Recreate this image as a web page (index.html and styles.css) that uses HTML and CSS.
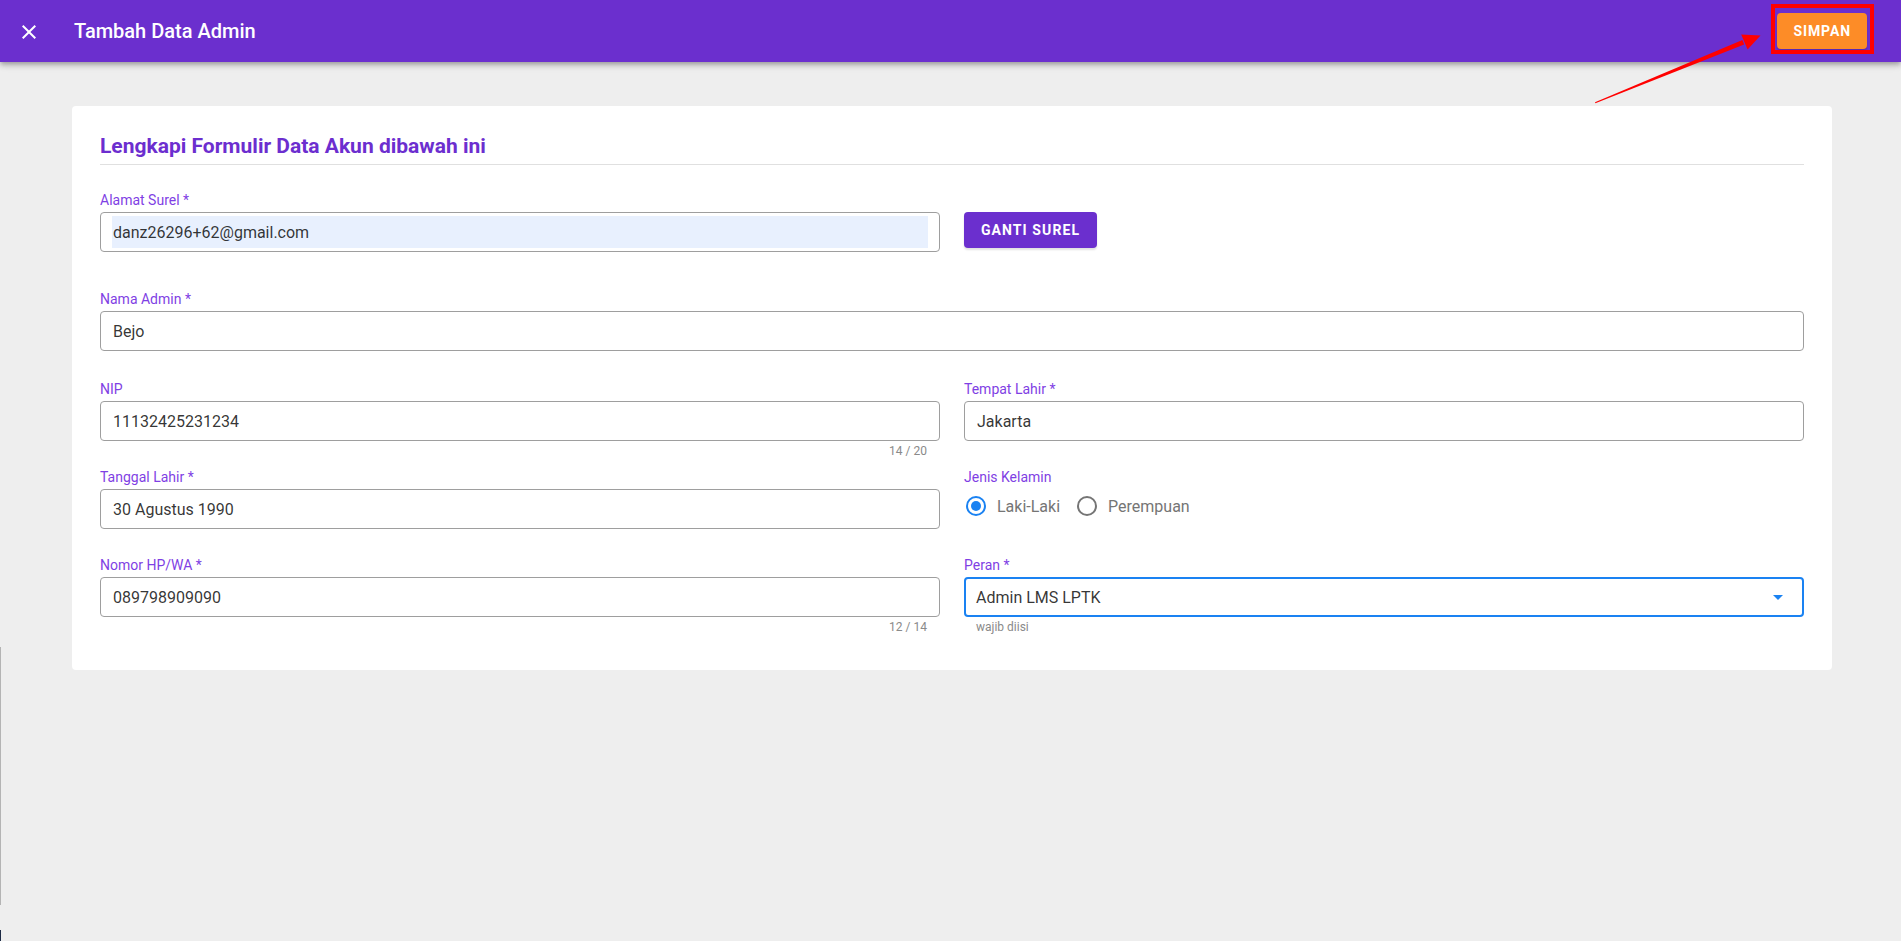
FILE: index.html
```html
<!DOCTYPE html>
<html lang="id">
<head>
<meta charset="utf-8">
<title>Tambah Data Admin</title>
<link rel="stylesheet" href="styles.css">
</head>
<body>
<header class="topbar">
  <button class="icon-btn" aria-label="Tutup">
    <svg viewBox="0 0 24 24" width="24" height="24"><path fill="#fff" d="M19,6.41L17.59,5L12,10.59L6.41,5L5,6.41L10.59,12L5,17.59L6.41,19L12,13.41L17.59,19L19,17.59L13.41,12L19,6.41Z"/></svg>
  </button>
  <div class="topbar-title">Tambah Data Admin</div>
  <button class="btn-save">SIMPAN</button>
</header>

<div class="annot-box"></div>
<svg class="annot-arrow" width="1901" height="120" viewBox="0 0 1901 120">
  <polygon fill="#f00" points="1595,102.2 1595.4,103.2 1744.2,44.6 1742.4,40.0"/>
  <polygon fill="#f00" points="1760.5,35.5 1741.2,34.4 1747.6,49.6"/>
</svg>
<div class="edge-line"></div>
<div class="edge-dark"></div>

<main class="page">
  <section class="card">
    <h2 class="card-title">Lengkapi Formulir Data Akun dibawah ini</h2>
    <div class="form-grid">
      <div class="field row-first">
        <label class="label">Alamat Surel *</label>
        <div class="input autofill"><span class="fill">danz26296+62@gmail.com</span></div>
        <div class="details"></div>
      </div>
      <div class="btn-cell row-first">
        <button class="btn-primary">GANTI SUREL</button>
      </div>

      <div class="field span2 row-name">
        <label class="label">Nama Admin *</label>
        <div class="input">Bejo</div>
        <div class="details"></div>
      </div>

      <div class="field">
        <label class="label">NIP</label>
        <div class="input">11132425231234</div>
        <div class="details counter">14 / 20</div>
      </div>
      <div class="field">
        <label class="label">Tempat Lahir *</label>
        <div class="input">Jakarta</div>
        <div class="details"></div>
      </div>

      <div class="field">
        <label class="label">Tanggal Lahir *</label>
        <div class="input">30 Agustus 1990</div>
        <div class="details"></div>
      </div>
      <div class="field">
        <label class="label">Jenis Kelamin</label>
        <div class="radio-group">
          <span class="radio checked"><span class="dot"></span></span>
          <span class="radio-text">Laki-Laki</span>
          <span class="radio"></span>
          <span class="radio-text">Perempuan</span>
        </div>
      </div>

      <div class="field">
        <label class="label">Nomor HP/WA *</label>
        <div class="input">089798909090</div>
        <div class="details counter">12 / 14</div>
      </div>
      <div class="field">
        <label class="label">Peran *</label>
        <div class="input select">
          <span>Admin LMS LPTK</span>
          <svg class="caret" viewBox="0 0 24 24" width="24" height="24"><path fill="#1a82f2" d="M7,10L12,15L17,10H7Z"/></svg>
        </div>
        <div class="details hint">wajib diisi</div>
      </div>
    </div>
  </section>
</main>
</body>
</html>
```

FILE: styles.css
```css
* { box-sizing: border-box; }

html, body {
  margin: 0;
  padding: 0;
}

body {
  background: #eeeeee;
  font-family: Roboto, "Liberation Sans", Arial, sans-serif;
  color: rgba(0, 0, 0, 0.87);
  min-height: 941px;
  position: relative;
}

.topbar {
  height: 62px;
  background: #6b2fce;
  display: flex;
  align-items: center;
  padding: 0 34px 0 17px;
  box-shadow: 0 2px 4px -1px rgba(0,0,0,.2), 0 4px 5px 0 rgba(0,0,0,.14), 0 1px 10px 0 rgba(0,0,0,.12);
  position: relative;
  z-index: 2;
}

.icon-btn {
  width: 24px;
  height: 24px;
  padding: 0;
  border: 0;
  background: transparent;
  display: flex;
  margin-top: 1px;
}

.topbar-title {
  margin-left: 33px;
  color: #fff;
  font-size: 20px;
  font-weight: 500;
  letter-spacing: 0;
}

.btn-save {
  margin-left: auto;
  height: 36px;
  padding: 0 16px;
  border: 0;
  border-radius: 4px;
  background: #fd8c27;
  color: #fff;
  font-family: Roboto, "Liberation Sans", Arial, sans-serif;
  font-size: 14px;
  font-weight: 700;
  letter-spacing: 0.9px;
  box-shadow: 0 2px 2px rgba(0,0,0,.15);
}

.annot-box {
  position: absolute;
  left: 1771px;
  top: 4px;
  width: 103px;
  height: 50px;
  border: 4px solid #f00;
  z-index: 3;
}

.annot-arrow {
  position: absolute;
  left: 0;
  top: 0;
  z-index: 3;
  pointer-events: none;
}

.edge-line {
  position: absolute;
  left: 0;
  top: 647px;
  width: 1px;
  height: 258px;
  background: #b4b4b4;
}

.edge-dark {
  position: absolute;
  left: 0;
  top: 930px;
  width: 1px;
  height: 11px;
  background: #1c2a44;
}

.page {
  padding: 44px 69px 0 72px;
}

.card {
  background: #fff;
  border-radius: 4px;
  padding: 26px 28px 31px;
}

.card-title {
  margin: 0 0 25px;
  padding-bottom: 4px;
  border-bottom: 1px solid #e0e0e0;
  font-size: 21px;
  line-height: 28px;
  font-weight: 700;
  color: #6c2ecf;
}

.form-grid {
  display: grid;
  grid-template-columns: 1fr 1fr;
  column-gap: 24px;
  row-gap: 4px;
}

.span2 { grid-column: 1 / -1; }

.row-first { margin-bottom: 11px; }
.row-name { margin-bottom: 2px; }

.field {
  display: flex;
  flex-direction: column;
}

.label {
  display: block;
  font-size: 14px;
  line-height: 20px;
  color: #7f3fe4;
  margin-bottom: 2px;
}

.input {
  height: 40px;
  border: 1px solid #9e9e9e;
  border-radius: 4px;
  padding: 0 12px;
  display: flex;
  align-items: center;
  font-size: 16px;
  color: rgba(0, 0, 0, 0.8);
}

.input.autofill {
  padding: 3px 11px;
  align-items: stretch;
}

.fill {
  flex: 1;
  background: #e8f0fe;
  display: flex;
  align-items: center;
  padding-left: 1px;
}

.input.select {
  border: 2px solid #1a82f2;
  padding: 0 12px 0 10px;
  justify-content: space-between;
}

.caret { display: block; }

.details {
  height: 22px;
  padding: 3px 13px 0 12px;
  font-size: 12px;
  line-height: 14px;
  color: #8a8a8a;
}

.counter { text-align: right; }
.hint { text-align: left; }

.btn-cell {
  padding-top: 22px;
}

.btn-primary {
  height: 36px;
  width: 133px;
  padding: 0;
  border: 0;
  border-radius: 4px;
  background: #6b2fce;
  color: #fff;
  font-family: Roboto, "Liberation Sans", Arial, sans-serif;
  font-size: 14px;
  font-weight: 700;
  letter-spacing: 1.1px;
  box-shadow: 0 2px 2px rgba(0,0,0,.12);
}

.radio-group {
  height: 34px;
  display: flex;
  align-items: center;
}

.radio {
  width: 20px;
  height: 20px;
  margin: 0 2px;
  border: 2px solid #757575;
  border-radius: 50%;
  display: flex;
  align-items: center;
  justify-content: center;
}

.radio.checked {
  border-color: #1a82f2;
}

.dot {
  width: 10px;
  height: 10px;
  border-radius: 50%;
  background: #1a82f2;
}

.radio-text {
  margin-left: 9px;
  margin-right: 15px;
  font-size: 16px;
  color: #757575;
}
```
